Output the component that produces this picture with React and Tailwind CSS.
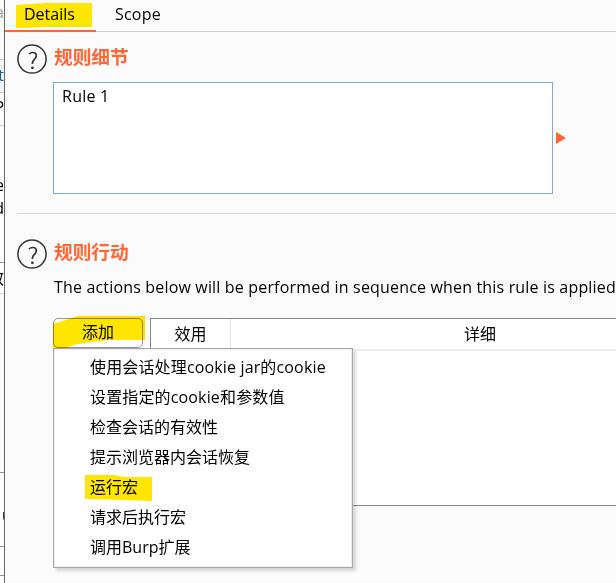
const latin = "font-['Open_Sans','Noto_Sans_CJK_SC',sans-serif]";

function HelpIcon() {
  return (
    <svg className="block size-[30px] shrink-0" viewBox="0 0 30 30" fill="none">
      <circle cx="15" cy="15" r="14.1" stroke="#333" strokeWidth="1.5" />
      <path d="M12 10C12.9 9.1 14.2 8.5 15.8 8.5C18 8.5 19.3 9.8 19.3 11.7C19.3 15 15.4 15.6 15.4 19V20" stroke="#333" strokeWidth="1.7" />
      <circle cx="15.4" cy="23.8" r="1.4" fill="#333" />
    </svg>
  );
}

function Section({ title, children }) {
  return (
    <section className="flex flex-col">
      <div className="flex h-[30px] items-start">
        <HelpIcon />
        <h2 className="ml-[7px] text-[18.7px] leading-[26px] font-bold text-[#ff6633]">{title}</h2>
      </div>
      {children}
    </section>
  );
}

const items = [
  "使用会话处理cookie jar的cookie",
  "设置指定的cookie和参数值",
  "检查会话的有效性",
  "提示浏览器内会话恢复",
  "运行宏",
  "请求后执行宏",
  "调用Burp扩展",
];

function Menu() {
  return (
    <ul className="absolute top-[30px] left-0 z-10 h-[220px] w-[300px] border border-[#a9a9a9] bg-white pt-[3px] shadow-[inset_0_0_0_1px_#ededed,3px_3px_3px_rgba(0,0,0,0.15)]">
      {items.map((item) => (
        <li key={item} className="relative flex h-[30px] items-center pl-9 whitespace-nowrap">
          {item === "运行宏" && (
            <svg className="absolute top-[3px] left-[31px] h-[26px] w-[67px]" viewBox="0 0 67 26">
              <path d="M0 0L28 0L40 2L67 2V26L40 25L0 24Z" fill="#ffe600" />
            </svg>
          )}
          <span className={item.includes("cookie") ? "relative tracking-[0.15px]" : "relative"}>{item}</span>
        </li>
      ))}
    </ul>
  );
}

function Sliver() {
  return (
    <aside className="flex h-full w-[5px] shrink-0 flex-col overflow-hidden border-r border-[#666] bg-white">
      <div className="flex h-[60px] justify-end border-b border-[#ccc] bg-[#fafafa] text-[#a0a0aa] leading-6">a</div>
      <div className="flex h-[33px] justify-end border-b border-[#ccc] bg-[#f1f4f6] pt-[3px] text-[#17619b]">t</div>
      <div className="flex h-[33px] justify-end border-b border-[#ccc] bg-white pt-[2px]">P</div>
      <div className="flex h-[137px] flex-col items-end border-b border-[#9292a5] pt-[48px] leading-[23px]">
        <div>e</div>
        <div>d</div>
      </div>
      <div className="flex h-[31px] justify-end border-b border-[#ddd] pt-[3px]">效</div>
      <div className="h-[179px] border-b border-[#9292a5] bg-[#fafafa]" />
      <div className="h-[74px] border-b border-[#9292a5] pt-[30px] pl-[2px] font-bold">u</div>
      <div className="h-[29px] border-b border-[#9292a5]" />
    </aside>
  );
}

export default function App() {
  return (
    <div className={`flex h-[583px] w-[616px] overflow-hidden bg-[#fbfbfb] text-base text-black ${latin}`}>
      <Sliver />
      <main className="flex min-w-0 flex-1 flex-col">
        <nav className="flex h-8 shrink-0 border-b border-[#c8cdcd]">
          <div className="relative h-[32px] w-[91px] border-b-2 border-[#ff6633]">
            <svg className="absolute top-[3px] left-[11px] h-[25px] w-[76px]" viewBox="0 0 76 25">
              <path d="M0 2L30 0H76V24H35L0 25Z" fill="#ffe600" />
            </svg>
            <span className="relative block pl-[19px] leading-7">Details</span>
          </div>
          <div className="pl-[19px] leading-7 tracking-[0.2px]">Scope</div>
        </nav>
        <div className="flex flex-col pt-3 pl-3">
          <Section title="规则细节">
            <div className="mt-2 ml-9 flex items-center">
              <div className="h-[112px] w-[500px] border border-[#7daad7] bg-white px-2 pt-px leading-6 tracking-[0.25px]">Rule 1</div>
              <svg className="ml-[3px] h-3 w-[10px]" viewBox="0 0 10 12">
                <path d="M0 0L10 6L0 12Z" fill="#ff6633" />
              </svg>
            </div>
          </Section>
          <hr className="mt-[19px] mb-[25px] border-[#d8d8d8]" />
          <Section title="规则行动">
            <p className="mt-[6px] ml-[37px] leading-6 tracking-[0.17px] whitespace-nowrap">
              The actions below will be performed in sequence when this rule is applied
            </p>
            <div className="mt-[19px] ml-9 flex items-start">
              <div className="relative h-[30px] w-[97px] shrink-0">
                <div className="h-[30px] w-[90px] rounded-[5px] border border-[#9292a5] bg-white" />
                <svg className="absolute -top-[2px] left-0 h-8 w-[92px] mix-blend-multiply" viewBox="0 0 92 32">
                  <path d="M0 8L25 0H92V24H55L25 28L12 32H0Z" fill="#ffe600" />
                </svg>
                <span className="absolute top-0 left-0 w-[90px] text-center leading-[28px]">添加</span>
                <Menu />
              </div>
              <div className="h-[188px] flex-1 border border-r-0 border-[#85858f] bg-white">
                <div className="flex h-[32px] border-b-2 border-[#ededed] text-center leading-[30px]">
                  <div className="w-20 border-r border-[#e2e2e2]">效用</div>
                  <div className="w-[498px] shrink-0">详细</div>
                </div>
              </div>
            </div>
          </Section>
        </div>
      </main>
    </div>
  );
}
